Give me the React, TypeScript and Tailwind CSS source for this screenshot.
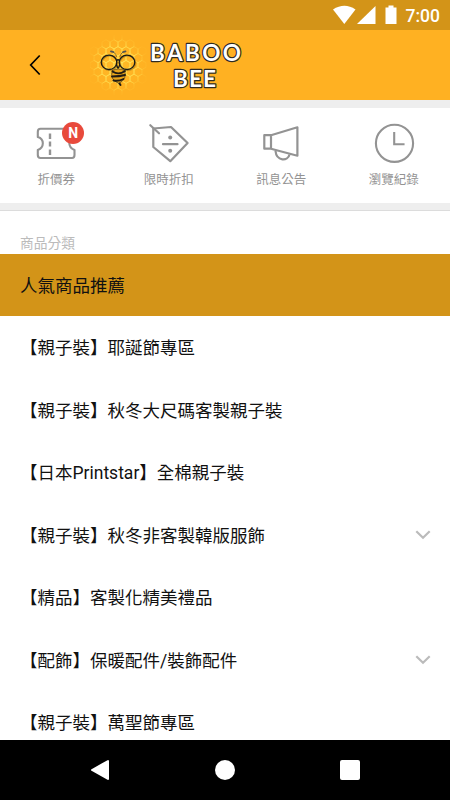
import type { ReactNode } from "react";

const SHORTCUTS: { label: string; icon: ReactNode; badge?: string }[] = [
  { label: "折價券", icon: <CouponIcon />, badge: "N" },
  { label: "限時折扣", icon: <DiscountIcon /> },
  { label: "訊息公告", icon: <MegaphoneIcon /> },
  { label: "瀏覽紀錄", icon: <ClockIcon /> },
];

const CATEGORIES = [
  { label: "人氣商品推薦", active: true },
  { label: "【親子裝】耶誕節專區" },
  { label: "【親子裝】秋冬大尺碼客製親子裝" },
  { label: "【日本Printstar】全棉親子裝" },
  { label: "【親子裝】秋冬非客製韓版服飾", expandable: true },
  { label: "【精品】客製化精美禮品" },
  { label: "【配飾】保暖配件/裝飾配件", expandable: true },
  { label: "【親子裝】萬聖節專區" },
];

// Pointy-top hexagons around the bee
const HEX_R = 4.6;
const HEX_W = 8;
const HEXES: { x: number; y: number }[] = [];
for (let row = -4; row <= 4; row++) {
  for (let col = -4; col <= 4; col++) {
    const x = 28 + col * HEX_W + (row % 2 !== 0 ? HEX_W / 2 : 0);
    const y = 30 + row * HEX_R * 1.5;
    if (Math.hypot(x - 28, y - 30) < 28) HEXES.push({ x, y });
  }
}

function hexPoints(x: number, y: number) {
  const w = HEX_W / 2;
  const h = HEX_R / 2;
  return `${x},${y - HEX_R} ${x + w},${y - h} ${x + w},${y + h} ${x},${y + HEX_R} ${x - w},${y + h} ${x - w},${y - h}`;
}

function CouponIcon() {
  return (
    <svg width="42" height="42" viewBox="0 0 42 42" fill="none" stroke="#939393" strokeWidth="2.1" strokeLinejoin="round">
      <path d="M5.5 6.8H37Q39.5 6.8 39.5 9.3V13.5C32.5 15.5 32.5 25.5 39.5 28V33Q39.5 36 37 36H5.5Q2.8 36 2.8 33V28C9.5 25.5 9.5 17 2.8 15V9.8Q2.8 6.8 5.5 6.8Z" />
      <path d="M15 11.5v5.5M15 19.5v5M15 27.5v5.5" strokeWidth="2.4" />
    </svg>
  );
}

function DiscountIcon() {
  return (
    <svg width="42" height="42" viewBox="0 0 42 42" fill="none" stroke="#939393" strokeWidth="2.2" strokeLinecap="round" strokeLinejoin="round">
      <path d="M5.3 6.5L23 5L39.6 21L22.3 39.2L5.3 25Z" />
      <path d="M2.3 3.2L11 11.3M15 22.2H29.5" />
      <circle cx="22.2" cy="15.6" r="2" fill="#939393" stroke="none" />
      <circle cx="22.2" cy="28.7" r="2" fill="#939393" stroke="none" />
    </svg>
  );
}

function MegaphoneIcon() {
  return (
    <svg width="42" height="42" viewBox="0 0 42 42" fill="none" stroke="#939393" strokeWidth="2.2" strokeLinejoin="round">
      <path d="M4.3 13.2H11V26.7H4.3ZM11 13.2L37.4 5.3V33.7L11 26.7" />
      <path d="M15.5 29C16.5 39.5 28 39.5 29.5 32.5" />
    </svg>
  );
}

function ClockIcon() {
  return (
    <svg width="42" height="42" viewBox="0 0 42 42" fill="none" stroke="#939393" strokeWidth="2.1">
      <circle cx="21.5" cy="21.3" r="18.6" />
      <path d="M21.2 11V22.2H30.5" strokeLinecap="square" />
    </svg>
  );
}

function Logo() {
  return (
    <svg width="158" height="60" viewBox="0 0 158 60" className="ml-[47px]">
      <defs>
        <radialGradient id="glow" gradientUnits="userSpaceOnUse" cx="28" cy="30" r="30">
          <stop offset="0" stopColor="#ffe95e" />
          <stop offset="0.6" stopColor="#ffe052" stopOpacity="0.8" />
          <stop offset="1" stopColor="#ffd040" stopOpacity="0.1" />
        </radialGradient>
        <radialGradient id="halo" gradientUnits="userSpaceOnUse" cx="28" cy="30" r="27">
          <stop offset="0" stopColor="#ffd030" stopOpacity="0.4" />
          <stop offset="1" stopColor="#ffc030" stopOpacity="0" />
        </radialGradient>
      </defs>
      <circle cx="28" cy="30" r="27" fill="url(#halo)" />
      <g fill="none" stroke="url(#glow)" strokeWidth="0.8">
        {HEXES.map(({ x, y }) => (
          <polygon key={`${x}-${y}`} points={hexPoints(x, y)} />
        ))}
      </g>
      <g fill="none" strokeLinecap="round">
        <path d="M26.5 21.5C26 18.5 24 16.8 21 16.5M30 21.5C30.5 18.5 32.5 16.8 35.5 16.5" stroke="#8a6a2a" />
        <path d="M21 16.3l2.5.7M35.5 16.3l-2.5.7" stroke="#555" strokeWidth="1.8" />
        <g stroke="#8a6414" strokeOpacity="0.5" strokeWidth="1.5">
          <ellipse cx="19.8" cy="28" rx="7.8" ry="7.2" />
          <ellipse cx="37.8" cy="28" rx="7.8" ry="7.2" />
        </g>
        <path d="M22.5 35.5Q28.5 32.5 34.5 35.5Q37.5 43.5 29 48.5Q19 44.5 22.5 35.5Z" fill="#e9a51b" stroke="#6b5320" strokeWidth="0.9" />
        <path d="M22.5 36.5Q28.5 40.5 35 36M22 41.5Q29.5 41.5 35 40M23.5 45.5Q29 46.5 33.5 44" stroke="#211b12" strokeWidth="1.9" />
        <path d="M29.5 48.5l1 1.5" stroke="#211b12" strokeWidth="2" />
        <g stroke="#171a17" strokeWidth="1.3">
          <ellipse cx="19" cy="27.3" rx="7.8" ry="7.2" />
          <ellipse cx="37" cy="27.3" rx="7.8" ry="7.2" />
          <path d="M26.5 25.5Q28 24 29.5 25.5M26.5 30l1.3 3M29.7 30l-1.3 3" />
        </g>
      </g>
      <g
        className="font-['Lato'] text-[22.5px] font-bold"
        fill="#fff"
        stroke="#2e2a22"
        strokeWidth="2.4"
        strokeLinejoin="round"
        paintOrder="stroke"
      >
        <text x="60" y="26" textLength="91">BABOO</text>
        <text x="83" y="52" textLength="43">BEE</text>
      </g>
    </svg>
  );
}

function StatusBar() {
  return (
    <div className="flex h-[30px] shrink-0 items-center justify-end bg-[#d39418] pr-2.5 text-white">
      <svg width="68" height="30" viewBox="0 0 68 30" fill="#fff">
        <path d="M0 9.5Q11.5 2 22.5 9.5L11.3 24Z" />
        <path d="M42.5 6V24H24Z" />
        <path d="M55.5 5.5h5v2h3V24H52.5V7.5h3Z" />
      </svg>
      <span className="ml-[5px] pt-0.5 text-[17.5px] leading-[30px] font-medium">7:00</span>
    </div>
  );
}

function NavigationBar() {
  return (
    <div className="flex h-[60px] shrink-0 items-center justify-between bg-black px-[90px]">
      <svg width="20" height="22" viewBox="0 0 20 22">
        <path d="M2 11L18 2V20Z" fill="#fff" stroke="#fff" strokeWidth="2" strokeLinejoin="round" />
      </svg>
      <div className="size-5 rounded-full bg-white" />
      <div className="size-5 rounded-[2px] bg-white" />
    </div>
  );
}

export default function App() {
  return (
    <div className="flex h-[800px] w-[450px] flex-col overflow-hidden bg-white font-['Roboto','Noto_Sans_CJK_TC',sans-serif]">
      <StatusBar />

      <header className="flex h-[70px] shrink-0 items-center bg-[#ffb122] pl-[29px]">
        <svg width="14" height="22" viewBox="0 0 14 22" fill="none" stroke="#000" strokeWidth="1.7">
          <path d="M10.7 1.5L1.7 11L10.7 20.5" />
        </svg>
        <Logo />
      </header>

      <div className="h-[7.5px] shrink-0 bg-[#eee]" />

      {/* Shortcuts */}
      <nav className="flex h-[95px] shrink-0">
        {SHORTCUTS.map(({ label, icon, badge }) => (
          <a key={label} href="#" className="flex flex-1 flex-col items-center pt-[14.5px]">
            <div className="relative">
              {icon}
              {badge && (
                <span className="absolute top-0 left-[27px] flex size-[22px] items-center justify-center rounded-full bg-[#e84a3c] text-sm font-bold text-white">
                  {badge}
                </span>
              )}
            </div>
            <span className="mt-1.5 text-[12.5px] leading-5 text-[#939393]">{label}</span>
          </a>
        ))}
      </nav>

      <div className="h-[8.5px] shrink-0 border-b border-[#dcdcdc] bg-[#eee]" />

      {/* Categories */}
      <h2 className="h-[42.75px] shrink-0 pt-[22px] pl-5 text-[13.75px] leading-5 text-[#bbb]">商品分類</h2>
      <ul className="min-h-0 flex-1 overflow-hidden">
        {CATEGORIES.map(({ label, active, expandable }) => (
          <li
            key={label}
            className={`flex h-[62.5px] items-center justify-between pr-[19.5px] pl-5 text-[17.5px] text-[#111] ${
              active ? "bg-[#d39418]" : "bg-white"
            }`}
          >
            <span className="pt-0.5">{label}</span>
            {expandable && (
              <svg width="16" height="10" viewBox="0 0 16 10" fill="none" stroke="#bbb" strokeWidth="2.2">
                <path d="M1.3 1.3L8 7.8L14.7 1.3" />
              </svg>
            )}
          </li>
        ))}
      </ul>

      <NavigationBar />
    </div>
  );
}
